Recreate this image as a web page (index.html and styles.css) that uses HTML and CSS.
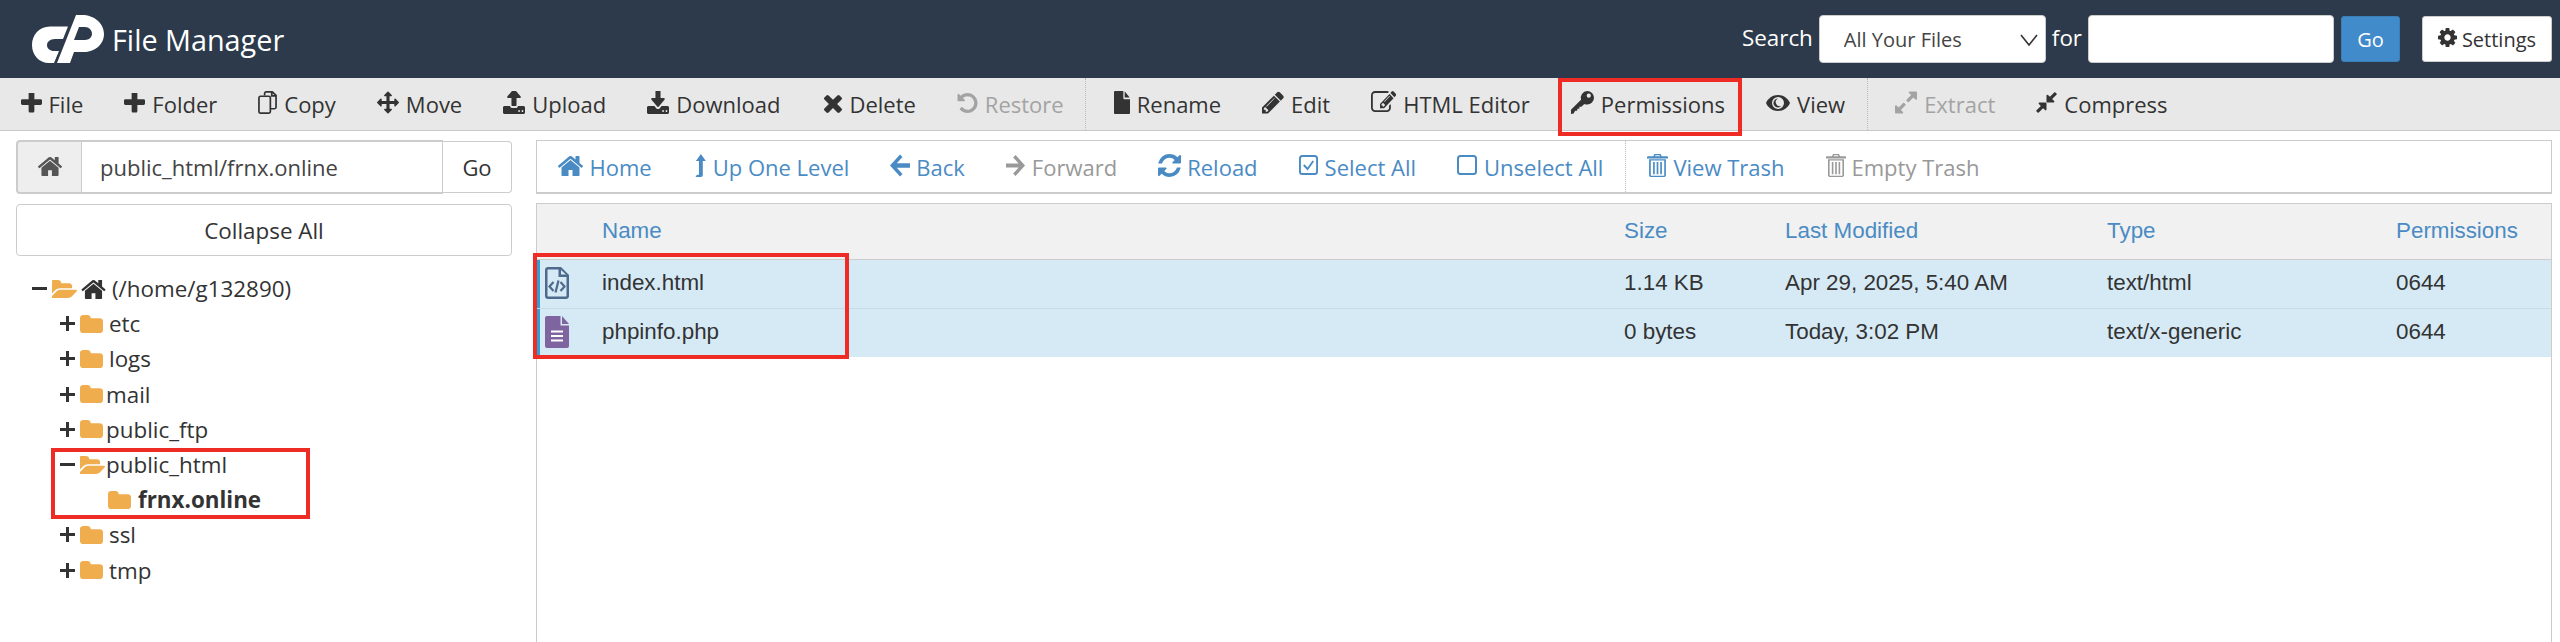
FILE: index.html
```html
<!DOCTYPE html>
<html lang="en">
<head>
<meta charset="utf-8">
<title>File Manager</title>
<link rel="stylesheet" href="styles.css">
</head>
<body>
<svg class="sprite" xmlns="http://www.w3.org/2000/svg">
  <symbol id="i-plus" viewBox="192 288 1408 1216"><path d="M1600 736v192q0 40-28 68t-68 28h-416v416q0 40-28 68t-68 28h-192q-40 0-68-28t-28-68v-416h-416q-40 0-68-28t-28-68v-192q0-40 28-68t68-28h416v-416q0-40 28-68t68-28h192q40 0 68 28t28 68v416h416q40 0 68 28t28 68z"/></symbol>
  <symbol id="i-tplus" viewBox="0 0 15 15"><path d="M6 0h3v6h6v3H9v6H6V9H0V6h6z"/></symbol>
  <symbol id="i-tminus" viewBox="0 0 15 15"><path d="M0 6h15v3H0z"/></symbol>
  <symbol id="i-home" viewBox="96 192 1600 1344"><path d="M1472 992v480q0 26-19 45t-45 19h-384v-384h-256v384h-384q-26 0-45-19t-19-45v-480q0-1 .5-3t.5-3l575-474 575 474q1 2 1 6zm223-69l-62 74q-8 9-21 11h-3q-13 0-21-7l-692-577-692 577q-12 8-24 7-13-2-21-11l-62-74q-8-10-7-23.5t11-21.5l719-599q32-26 76-26t76 26l244 204v-195q0-14 9-23t23-9h192q14 0 23 9t9 23v408l219 182q10 8 11 21.5t-7 23.5z"/></symbol>
  <symbol id="i-folder" viewBox="64 128 1664 1408" preserveAspectRatio="none"><path d="M1728 608v704q0 92-66 158t-158 66h-1216q-92 0-158-66t-66-158v-960q0-92 66-158t158-66h320q92 0 158 66t66 158v32h672q92 0 158 66t66 158z"/></symbol>
  <symbol id="i-folder-open" viewBox="64 128 1751 1408" preserveAspectRatio="none"><path d="M1815 952q0 31-31 66l-336 396q-43 51-120.5 86.5t-143.5 35.5h-1088q-34 0-60.5-13t-26.5-43q0-31 31-66l336-396q43-51 120.5-86.5t143.5-35.5h1088q34 0 60.5 13t26.5 43zm-343-344v160h-832q-94 0-197 47.5t-164 119.5l-337 396-5 6q0-4-.5-12.5t-.5-12.5v-960q0-92 66-158t158-66h320q92 0 158 66t66 158v32h544q92 0 158 66t66 158z"/></symbol>
  <symbol id="i-move" viewBox="0 0 1792 1792"><path d="M1792 896q0 26-19 45l-256 256q-19 19-45 19t-45-19-19-45v-128h-384v384h128q26 0 45 19t19 45-19 45l-256 256q-19 19-45 19t-45-19l-256-256q-19-19-19-45t19-45 45-19h128v-384h-384v128q0 26-19 45t-45 19-45-19l-256-256q-19-19-19-45t19-45l256-256q19-19 45-19t45 19 19 45v128h384v-384h-128q-26 0-45-19t-19-45 19-45l256-256q19-19 45-19t45 19l256 256q19 19 19 45t-19 45-45 19h-128v384h384v-128q0-26 19-45t45-19 45 19l256 256q19 19 19 45z"/></symbol>
  <symbol id="i-upload" viewBox="64 192 1664 1472" preserveAspectRatio="none"><path d="M1344 1472q0-26-19-45t-45-19-45 19-19 45 19 45 45 19 45-19 19-45zm256 0q0-26-19-45t-45-19-45 19-19 45 19 45 45 19 45-19 19-45zm128-224v320q0 40-28 68t-68 28h-1472q-40 0-68-28t-28-68v-320q0-40 28-68t68-28h427q21 56 70.5 92t110.5 36h256q61 0 110.5-36t70.5-92h427q40 0 68 28t28 68zm-325-648q-17 40-59 40h-256v448q0 26-19 45t-45 19h-256q-26 0-45-19t-19-45v-448h-256q-42 0-59-40-17-39 14-69l448-448q18-19 45-19t45 19l448 448q31 30 14 69z"/></symbol>
  <symbol id="i-download" viewBox="64 64 1664 1472" preserveAspectRatio="none"><path d="M1344 1344q0-26-19-45t-45-19-45 19-19 45 19 45 45 19 45-19 19-45zm256 0q0-26-19-45t-45-19-45 19-19 45 19 45 45 19 45-19 19-45zm128-224v320q0 40-28 68t-68 28h-1472q-40 0-68-28t-28-68v-320q0-40 28-68t68-28h465l135 136q58 56 136 56t136-56l136-136h464q40 0 68 28t28 68zm-325-569q17 41-14 70l-448 448q-18 19-45 19t-45-19l-448-448q-31-29-14-70 17-39 59-39h256v-448q0-26 19-45t45-19h256q26 0 45 19t19 45v448h256q42 0 59 39z"/></symbol>
  <symbol id="i-times" viewBox="302 238 1188 1316"><path d="M1490 1322q0 40-28 68l-136 136q-28 28-68 28t-68-28l-294-294-294 294q-28 28-68 28t-68-28l-136-136q-28-28-28-68t28-68l294-294-294-294q-28-28-28-68t28-68l136-136q28-28 68-28t68 28l294 294 294-294q28-28 68-28t68 28l136 136q28 28 28 68t-28 68l-294 294 294 294q28 28 28 68z"/></symbol>
  <symbol id="i-undo" viewBox="128 128 1536 1536"><path d="M1664 896q0 156-61 298t-164 245-245 164-298 61q-172 0-327-72.5t-264-204.5q-7-10-6.5-22.5t8.5-20.5l137-138q10-9 25-9 16 2 23 12 73 95 179 147t225 52q104 0 198.5-40.5t163.5-109.5 109.5-163.5 40.5-198.5-40.5-198.5-109.5-163.5-163.5-109.5-198.5-40.5q-98 0-188 35.5t-160 101.5l137 138q31 30 14 69-17 40-59 40h-448q-26 0-45-19t-19-45v-448q0-42 40-59 39-17 69 14l130 129q107-101 244.5-156.5t284.5-55.5q156 0 298 61t245 164 164 245 61 298z"/></symbol>
  <symbol id="i-file" viewBox="128 0 1536 1792" preserveAspectRatio="none"><path d="M1152 512v-472q22 14 36 28l408 408q14 14 28 36h-472zm-128 32q0 40 28 68t68 28h544v1056q0 40-28 68t-68 28h-1344q-40 0-68-28t-28-68v-1600q0-40 28-68t68-28h800v544z"/></symbol>
  <symbol id="i-pencil" viewBox="128 128 1536 1536"><path d="M491 1536l91-91-235-235-91 91v107h128v128h107zm523-928q0-22-22-22-10 0-17 7l-542 542q-7 7-7 17 0 22 22 22 10 0 17-7l542-542q7-7 7-17zm-54-192l416 416-832 832h-416v-416zm683 96q0 53-37 90l-166 166-416-416 166-165q36-38 90-38 53 0 91 38l235 234q37 39 37 91z"/></symbol>
  <symbol id="i-edit" viewBox="0 128 1772 1536" preserveAspectRatio="none"><path d="M888 1184l116-116-152-152-116 116v56h96v96h56zm440-720q-16-16-33 1l-350 350q-17 17-1 33t33-1l350-350q17-17 1-33zm80 594v190q0 119-84.5 203.5t-203.5 84.5h-832q-119 0-203.5-84.5t-84.5-203.5v-832q0-119 84.5-203.5t203.5-84.5h832q63 0 117 25 15 7 18 23 3 17-9 29l-49 49q-14 14-32 8-23-6-45-6h-832q-66 0-113 47t-47 113v832q0 66 47 113t113 47h832q66 0 113-47t47-113v-126q0-13 9-22l64-64q15-15 35-7t20 29zm-96-738l288 288-672 672h-288v-288zm444 132l-92 92-288-288 92-92q28-28 68-28t68 28l152 152q28 28 28 68t-28 68z"/></symbol>
  <symbol id="i-key" viewBox="0 0 22 22"><path fill-rule="evenodd" d="M15.500 0a6.500 6.500 0 0 1 0 13c-1 0-2-.2-2.800-.6L10 15H8v2H6v2H4l-1.500 2.500L0 22v-4l9.600-9.600A6.500 6.500 0 0 1 15.500 0zM17 2.500a2 2 0 1 0 0 4 2 2 0 0 0 0-4z"/></symbol>
  <symbol id="i-eye" viewBox="0 0 24 16"><path fill-rule="evenodd" d="M12 0C6.500 0 2 3.500 0 8c2 4.500 6.500 8 12 8s10-3.500 12-8c-2-4.500-6.500-8-12-8zm0 2a6 6 0 1 1 0 12 6 6 0 0 1 0-12z"/><path d="M12 3.500a4.500 4.500 0 1 0 3.600 7.200A4 4 0 0 1 12 3.500z"/></symbol>
  <symbol id="i-expand" viewBox="128 128 1536 1536"><path d="M883 1056q0 13-10 23l-332 332 144 144q19 19 19 45t-19 45-45 19h-448q-26 0-45-19t-19-45v-448q0-26 19-45t45-19 45 19l144 144 332-332q10-10 23-10t23 10l114 114q10 10 10 23zm781-864v448q0 26-19 45t-45 19-45-19l-144-144-332 332q-10 10-23 10t-23-10l-114-114q-10-10-10-23t10-23l332-332-144-144q-19-19-19-45t19-45 45-19h448q26 0 45 19t19 45z"/></symbol>
  <symbol id="i-compress" viewBox="128 128 1536 1536"><path d="M896 960v448q0 26-19 45t-45 19-45-19l-144-144-332 332q-10 10-23 10t-23-10l-114-114q-10-10-10-23t10-23l332-332-144-144q-19-19-19-45t19-45 45-19h448q26 0 45 19t19 45zm755-672q0 13-10 23l-332 332 144 144q19 19 19 45t-19 45-45 19h-448q-26 0-45-19t-19-45v-448q0-26 19-45t45-19 45 19l144 144 332-332q10-10 23-10t23 10l114 114q10 10 10 23z"/></symbol>
  <symbol id="i-cog" viewBox="128 128 1536 1536"><path d="M1152 896q0-106-75-181t-181-75-181 75-75 181 75 181 181 75 181-75 75-181zm512-109v222q0 12-8 23t-20 13l-185 28q-19 54-39 91 35 50 107 138 10 12 10 25t-9 23q-27 37-99 108t-94 71q-12 0-26-9l-138-108q-44 23-91 38-16 136-29 186-7 28-36 28h-222q-14 0-24.5-8.5t-11.5-21.5l-28-184q-49-16-90-37l-141 107q-10 9-25 9-14 0-25-11-126-114-165-168-7-10-7-23 0-12 8-23 15-21 51-66.5t54-70.5q-27-50-41-99l-183-27q-13-2-21-12.5t-8-23.5v-222q0-12 8-23t19-13l186-28q14-46 39-92-40-57-107-138-10-12-10-24 0-10 9-23 26-36 98.5-107.5t94.5-71.5q13 0 26 10l138 107q44-23 91-38 16-136 29-186 7-28 36-28h222q14 0 24.5 8.5t11.5 21.5l28 184q49 16 90 37l142-107q9-9 24-9 13 0 25 10 129 119 165 170 7 8 7 22 0 12-8 23-15 21-51 66.5t-54 70.5q26 50 41 98l183 28q13 2 21 12.5t8 23.5z"/></symbol>
  <symbol id="i-level-up" viewBox="0 0 16 30"><path d="M8.500 0l6.500 9h-4v18.500c0 1.400-.8 2.500-2.200 2.500H1.500l1.800-3H6V9H2z"/></symbol>
  <symbol id="i-left" viewBox="0 0 20 22"><path d="M10 0l2.500 2.500L6.800 8.800H20v4.400H6.800l5.700 6.300L10 22 0 11z"/></symbol>
  <symbol id="i-right" viewBox="0 0 20 22"><path d="M10 0L7.500 2.500l5.700 6.300H0v4.400h13.200l-5.700 6.300L10 22l10-11z"/></symbol>
  <symbol id="i-refresh" viewBox="128 128 1536 1536" preserveAspectRatio="none"><path d="M1639 1056q0 5-1 7-64 268-268 434.5t-478 166.5q-146 0-282.500-55t-243.500-157l-129 129q-19 19-45 19t-45-19-19-45v-448q0-26 19-45t45-19h448q26 0 45 19t19 45-19 45l-137 137q71 66 161 102t187 36q134 0 250-65t186-179q11-17 53-117 8-23 30-23h192q13 0 22.500 9.500t9.500 22.500zm25-800v448q0 26-19 45t-45 19h-448q-26 0-45-19t-19-45 19-45l138-138q-148-137-349-137-134 0-250 65t-186 179q-11 17-53 117-8 23-30 23h-199q-13 0-22.500-9.500t-9.500-22.500v-7q65-268 270-434.500t480-166.500q146 0 284 55.500t245 156.500l130-129q19-19 45-19t45 19 19 45z"/></symbol>
  <symbol id="i-check" viewBox="0 0 20 20" preserveAspectRatio="none"><rect x="1" y="1" width="18" height="18" rx="2.500" fill="none" stroke="currentColor" stroke-width="2"/><path d="M5 10l4 4 6-8" fill="none" stroke="currentColor" stroke-width="2"/></symbol>
  <symbol id="i-square" viewBox="0 0 20 20" preserveAspectRatio="none"><rect x="1" y="1" width="18" height="18" rx="2.500" fill="none" stroke="currentColor" stroke-width="2"/></symbol>
  <symbol id="i-trash" viewBox="0 0 20 30" preserveAspectRatio="none"><path d="M7 0h6l1 3h5c.6 0 1 .4 1 1v2H0V4c0-.6.4-1 1-1h5zm1 1.500L7.600 3h4.800L12 1.500z"/><path fill-rule="evenodd" d="M2 7h16v21c0 1.100-.9 2-2 2H4c-1.100 0-2-.9-2-2zm1.600 1.500V28c0 .3.200.5.500.5h11.800c.3 0 .5-.2.500-.5V8.500z"/><path d="M5.800 10.500h1.600v16H5.800zm3.400 0h1.600v16H9.200zm3.400 0h1.600v16h-1.600z"/></symbol>
  <symbol id="i-copy" viewBox="0 0 20 26" preserveAspectRatio="none"><path d="M7 5V2.500C7 1.700 7.700 1 8.500 1H15l4 4v13.500c0 .8-.7 1.500-1.500 1.500H13M14.500 1v4.500H19" fill="none" stroke="currentColor" stroke-width="1.800"/><rect x="1" y="6" width="12" height="19" rx="1.500" fill="none" stroke="currentColor" stroke-width="1.800"/></symbol>
  <symbol id="i-logo" viewBox="0 0 72 48"><path d="M36 11.500L31 24H23C18 24 15 27 15 30C15 33.500 18 36 22 36H27L22 48H17C7 48 0 40 0 30C0 20 7 11.500 18 11.500Z"/><path fill-rule="evenodd" d="M44 0H50C62 0 72 8 72 19C72 30 62 37 52 37H42L38 48H25ZM47 12L42 25H53C57 25 60 22 60 19C60 15 57 12 53 12Z"/></symbol>
</svg>

<header class="topbar">
  <div class="brand">
    <svg class="logo"><use href="#i-logo"/></svg>
    <span class="brand-name">File Manager</span>
  </div>
  <form class="search">
    <label class="search-label" for="scope">Search</label>
    <div class="select-wrap">
      <select id="scope" class="select"><option>All Your Files</option></select>
      <svg class="chevron" viewBox="0 0 18 12"><path d="M1 1l8 10 8-10" fill="none" stroke="#333" stroke-width="1.600"/></svg>
    </div>
    <label class="search-label" for="term">for</label>
    <input id="term" class="search-input" type="text">
    <button type="button" class="btn-go">Go</button>
    <button type="button" class="btn-settings"><svg class="ic-cog"><use href="#i-cog"/></svg>Settings</button>
  </form>
</header>

<nav class="toolbar">
  <a class="tool"><svg class="ic w21"><use href="#i-plus"/></svg>File</a>
  <a class="tool"><svg class="ic w21"><use href="#i-plus"/></svg>Folder</a>
  <a class="tool"><svg class="ic w19 tall"><use href="#i-copy"/></svg>Copy</a>
  <a class="tool"><svg class="ic w22 tall"><use href="#i-move"/></svg>Move</a>
  <a class="tool"><svg class="ic w22 tall"><use href="#i-upload"/></svg>Upload</a>
  <a class="tool"><svg class="ic w22 tall"><use href="#i-download"/></svg>Download</a>
  <a class="tool after-wide"><svg class="ic w18"><use href="#i-times"/></svg>Delete</a>
  <a class="tool off"><svg class="ic w21"><use href="#i-undo"/></svg>Restore</a>
  <span class="sep"></span>
  <a class="tool"><svg class="ic w16 tall"><use href="#i-file"/></svg>Rename</a>
  <a class="tool"><svg class="ic w22 tall"><use href="#i-pencil"/></svg>Edit</a>
  <a class="tool"><svg class="ic w25 tall"><use href="#i-edit"/></svg>HTML Editor</a>
  <a class="tool"><svg class="ic w23 tall"><use href="#i-key"/></svg>Permissions</a>
  <a class="tool"><svg class="ic w24"><use href="#i-eye"/></svg>View</a>
  <span class="sep"></span>
  <a class="tool off"><svg class="ic w22 tall"><use href="#i-expand"/></svg>Extract</a>
  <a class="tool"><svg class="ic w21 tall"><use href="#i-compress"/></svg>Compress</a>
</nav>

<main class="main">
  <aside class="side">
    <div class="path-group">
      <span class="path-home"><svg class="ic w24"><use href="#i-home"/></svg></span>
      <input class="path-input" type="text" value="public_html/frnx.online">
      <button type="button" class="path-go">Go</button>
    </div>
    <button type="button" class="collapse">Collapse All</button>
    <ul class="tree">
      <li class="node root"><svg class="tg"><use href="#i-tminus"/></svg><svg class="fo-open"><use href="#i-folder-open"/></svg><svg class="tree-home"><use href="#i-home"/></svg><span>(/home/g132890)</span></li>
      <li class="node"><svg class="tg"><use href="#i-tplus"/></svg><svg class="fo"><use href="#i-folder"/></svg><span class="lbl">etc</span></li>
      <li class="node"><svg class="tg"><use href="#i-tplus"/></svg><svg class="fo"><use href="#i-folder"/></svg><span class="lbl">logs</span></li>
      <li class="node"><svg class="tg"><use href="#i-tplus"/></svg><svg class="fo"><use href="#i-folder"/></svg><span class="lbl tight">mail</span></li>
      <li class="node"><svg class="tg"><use href="#i-tplus"/></svg><svg class="fo"><use href="#i-folder"/></svg><span class="lbl tight">public_ftp</span></li>
      <li class="node"><svg class="tg"><use href="#i-tminus"/></svg><svg class="fo-open"><use href="#i-folder-open"/></svg><span class="lbl flush">public_html</span></li>
      <li class="node leaf"><svg class="fo"><use href="#i-folder"/></svg><strong class="lbl cur">frnx.online</strong></li>
      <li class="node"><svg class="tg"><use href="#i-tplus"/></svg><svg class="fo"><use href="#i-folder"/></svg><span class="lbl">ssl</span></li>
      <li class="node"><svg class="tg"><use href="#i-tplus"/></svg><svg class="fo"><use href="#i-folder"/></svg><span class="lbl">tmp</span></li>
    </ul>
  </aside>
  <section class="content">
    <div class="actions">
      <a class="act"><svg class="ic w25 tall"><use href="#i-home"/></svg>Home</a>
      <a class="act gap5"><svg class="ic w15 tall"><use href="#i-level-up"/></svg>Up One Level</a>
      <a class="act gap6"><svg class="ic w20 tall"><use href="#i-left"/></svg>Back</a>
      <a class="act off"><svg class="ic w19 tall"><use href="#i-right"/></svg>Forward</a>
      <a class="act gap6"><svg class="ic w23 tall"><use href="#i-refresh"/></svg>Reload</a>
      <a class="act"><svg class="ic w19"><use href="#i-check"/></svg>Select All</a>
      <a class="act"><svg class="ic w20"><use href="#i-square"/></svg>Unselect All</a>
      <span class="sep"></span>
      <a class="act gap5"><svg class="ic w21 tall"><use href="#i-trash"/></svg>View Trash</a>
      <a class="act off gap6"><svg class="ic w20 tall"><use href="#i-trash"/></svg>Empty Trash</a>
    </div>
    <div class="files">
      <table class="table">
        <colgroup><col class="c-ic"><col class="c-name"><col class="c-size"><col class="c-mod"><col class="c-type"><col></colgroup>
        <thead>
          <tr><th></th><th>Name</th><th>Size</th><th>Last Modified</th><th>Type</th><th>Permissions</th></tr>
        </thead>
        <tbody>
          <tr>
            <td class="cell-ic"><svg class="ficon" viewBox="0 0 24 32"><path fill="#4e6a8c" fill-rule="evenodd" d="M3 0h13l8 8v21c0 1.700-1.300 3-3 3H3c-1.700 0-3-1.300-3-3V3c0-1.700 1.300-3 3-3zm0 2.500c-.3 0-.5.200-.5.500v26c0 .3.200.5.500.5h18c.3 0 .5-.2.500-.5V10h-8V2.500zM16 3v4.500h5z"/><path fill="none" stroke="#4e6a8c" stroke-width="2.200" d="M8.500 15l-4 4.500 4 4.500M15.500 15l4 4.500-4 4.500M13.500 13.500l-3 12"/></svg></td>
            <td>index.html</td><td>1.14 KB</td><td>Apr 29, 2025, 5:40 AM</td><td>text/html</td><td>0644</td>
          </tr>
          <tr>
            <td class="cell-ic"><svg class="ficon" viewBox="0 0 24 32"><path fill="#7f659f" d="M2 0h13.500v9.500H24V30c0 1.100-.9 2-2 2H2c-1.100 0-2-.9-2-2V2C0 .9.900 0 2 0z"/><path fill="#7f659f" d="M17 0l7 8h-7z"/><path fill="#fff" d="M6 14.500h12v2H6zm0 4.500h12v2H6zm0 4.500h12v2H6z"/></svg></td>
            <td>phpinfo.php</td><td>0 bytes</td><td>Today, 3:02 PM</td><td>text/x-generic</td><td>0644</td>
          </tr>
        </tbody>
      </table>
    </div>
  </section>
</main>

<div class="mark mark-perm"></div>
<div class="mark mark-tree"></div>
<div class="mark mark-files"></div>
</body>
</html>
```
FILE: styles.css
```css
* { box-sizing: border-box; }
html, body { margin: 0; padding: 0; }
body {
  position: relative;
  height: 642px;
  overflow: hidden;
  background: #fff;
  color: #333;
  font-family: "Open Sans", sans-serif;
  font-size: 22.4px;
  display: flex;
  flex-direction: column;
}
.sprite { position: absolute; width: 0; height: 0; overflow: hidden; }
svg { fill: currentColor; display: block; flex: none; }

.topbar {
  height: 78px;
  flex: none;
  background: #2c3a4b;
  color: #fff;
  display: flex;
  align-items: center;
  justify-content: space-between;
  padding: 0 8px 0 32px;
}
.brand { display: flex; align-items: center; gap: 8px; }
.logo { width: 72px; height: 48px; color: #fff; }
.brand-name { font-size: 28.800px; }
.search { display: flex; align-items: center; }
.search-label { font-size: 22.4px; margin-top: -4px; }
.select-wrap { position: relative; margin: 0 6px; }
.select {
  display: block;
  width: 227px;
  height: 48px;
  padding: 0 0 0 24px;
  background: #fff;
  border: 1px solid #ccc;
  border-radius: 4px;
  appearance: none;
  color: #444;
  font: 20px "Open Sans", sans-serif;
}
.chevron { position: absolute; right: 8px; top: 19px; width: 18px; height: 12px; fill: none; }
.search-input {
  width: 246px;
  height: 48px;
  margin-left: 6px;
  background: #fff;
  border: 1px solid #ccc;
  border-radius: 4px;
}
.btn-go {
  width: 59px;
  height: 46px;
  margin-left: 7px;
  background: #428bca;
  color: #fff;
  border: 1px solid #3b7fb9;
  border-radius: 3px;
  font: 20px "Open Sans", sans-serif;
}
.btn-settings {
  width: 130px;
  height: 46px;
  margin-left: 22px;
  display: flex;
  align-items: center;
  justify-content: center;
  gap: 5px;
  background: #fff;
  color: #333;
  border: 1px solid #ccc;
  border-radius: 3px;
  font: 20px "Open Sans", sans-serif;
}
.ic-cog { width: 19px; height: 19px; margin-top: -4px; }

.toolbar {
  height: 53px;
  flex: none;
  display: flex;
  align-items: stretch;
  background: #e8e8e8;
  border-bottom: 1px solid #c9c9c9;
  font-size: 22px;
}
.tool, .act {
  display: flex;
  align-items: center;
  gap: 7px;
  padding: 0 20.500px;
  white-space: nowrap;
}
.after-wide { margin-left: 3px; }
.gap5 { gap: 5px; }
.gap6 { gap: 6px; }
.tool { color: #333; }
.tool.off { color: #a3a3a3; }
.sep { width: 0; border-left: 1px dotted #bbb; margin: 0 1px; }
.toolbar .sep { margin: 0 7px 0 1px; }
.ic { height: 20px; margin-top: -3px; }
.ic.tall { height: 23px; }
.w15 { width: 15px; } .w16 { width: 16px; } .w18 { width: 18px; } .w19 { width: 19px; }
.w20 { width: 20px; } .w21 { width: 21px; } .w22 { width: 22px; } .w23 { width: 23px; }
.w24 { width: 24px; } .w25 { width: 25px; }

.main {
  flex: 1;
  display: flex;
  min-height: 0;
  padding: 9px 8px 0 16px;
  gap: 24px;
}
.side { width: 496px; flex: none; display: flex; flex-direction: column; }
.path-group { display: flex; height: 54px; align-items: center; }
.path-home {
  width: 66px;
  height: 54px;
  display: flex;
  align-items: center;
  justify-content: center;
  color: #555;
  background: #eee;
  border: 2px solid #ccc;
  border-right-width: 1px;
  border-radius: 4px 0 0 4px;
}
.path-input {
  width: 361px;
  height: 54px;
  padding: 0 0 0 18px;
  border: 2px solid #ccc;
  border-width: 2px 1px 2px 0;
  color: #444;
  font: 22px "Open Sans", sans-serif;
}
.path-go {
  width: 69px;
  height: 52px;
  background: #fff;
  border: 1px solid #ccc;
  border-left: 0;
  border-radius: 0 4px 4px 0;
  color: #333;
  font: 22px "Open Sans", sans-serif;
}
.collapse {
  height: 52px;
  margin-top: 10px;
  background: #fff;
  border: 1px solid #ccc;
  border-radius: 4px;
  color: #333;
  font: 22.4px "Open Sans", sans-serif;
}
.tree { list-style: none; margin: 15px 0 0; padding: 0 0 0 16px; }
.node {
  height: 35.200px;
  display: flex;
  align-items: center;
  padding-left: 28px;
  color: #333;
  white-space: nowrap;
}
.node.root { padding-left: 0; }
.tg { width: 15px; height: 15px; margin-right: 5px; }
.fo, .fo-open { color: #f0ad4e; }
.fo { width: 23px; height: 18px; }
.fo-open { width: 25px; height: 18px; }
.tree-home { width: 25px; height: 20px; margin: 0 6px 0 4px; color: #333; }
.lbl { margin-left: 6px; }
.lbl.tight { margin-left: 3px; }
.lbl.flush { margin-left: 1px; }
.node.leaf { padding-left: 76px; }
.cur { margin-left: 7px; font-weight: 700; }

.content { flex: 1; min-width: 0; display: flex; flex-direction: column; }
.actions {
  height: 54px;
  flex: none;
  display: flex;
  align-items: stretch;
  border: 2px solid #ccc;
  border-width: 1px 1px 2px 1px;
  background: #fff;
  font-size: 22px;
}
.act { color: #4a8bc4; }
.act.off { color: #999; }
.files {
  flex: 1;
  margin-top: 9px;
  border: 1px solid #ccc;
  border-bottom: 0;
  background: #fff;
}
.table {
  width: 100%;
  table-layout: fixed;
  border-collapse: collapse;
  font-family: "Liberation Sans", Arial, sans-serif;
  font-size: 22.4px;
}
.c-ic { width: 65px; }
.c-name { width: 1022px; }
.c-size { width: 161px; }
.c-mod { width: 322px; }
.c-type { width: 289px; }
.table th {
  height: 55px;
  padding: 0;
  text-align: left;
  font-weight: 400;
  color: #4a8bc4;
  background: #f1f1f1;
  border-bottom: 1px solid #ccc;
}
.table td {
  height: 49px;
  padding: 0 0 1px;
  background: #d6eaf6;
  color: #333;
  border-bottom: 1px solid #c9dbe6;
}
.table tr:last-child td { border-bottom: 0; }
.cell-ic { box-shadow: inset 3px 0 0 #2f9fd8; padding-left: 8px !important; }
.ficon { width: 24px; height: 32px; }

.mark { position: absolute; border: 4px solid #ee2b24; pointer-events: none; }
.mark-perm { left: 1558px; top: 78px; width: 184px; height: 58px; }
.mark-tree { left: 51px; top: 448px; width: 259px; height: 71px; }
.mark-files { left: 533px; top: 253px; width: 316px; height: 106px; }
```
